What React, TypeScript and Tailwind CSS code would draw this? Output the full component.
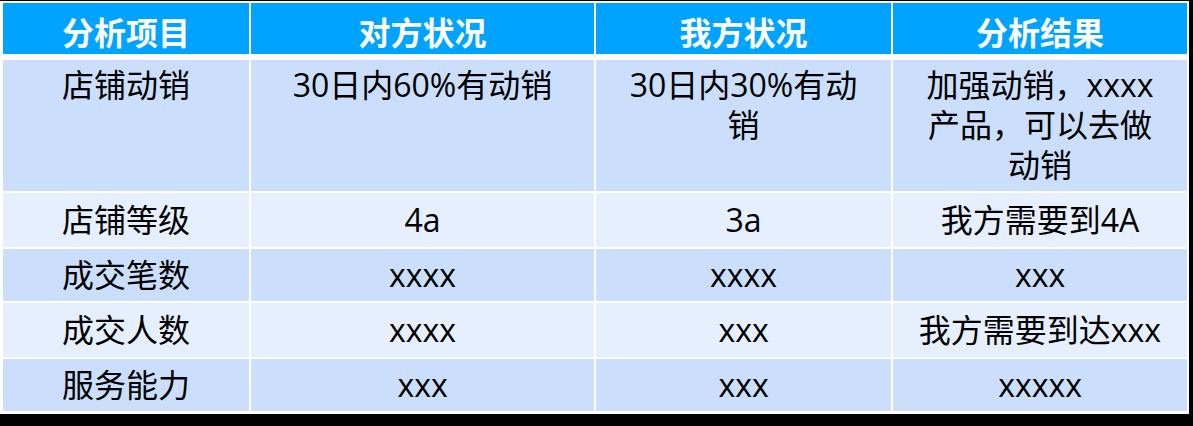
const headers = ["分析项目", "对方状况", "我方状况", "分析结果"];

const rows: { cells: string[][]; tone: "dark" | "light"; height: string; top?: boolean }[] = [
  {
    cells: [["店铺动销"], ["30日内60%有动销"], ["30日内30%有动", "销"], ["加强动销，xxxx", "产品，可以去做", "动销"]],
    tone: "dark",
    height: "h-[131px]",
    top: true
  },
  { cells: [["店铺等级"], ["4a"], ["3a"], ["我方需要到4A"]], tone: "light", height: "h-[54px]" },
  { cells: [["成交笔数"], ["xxxx"], ["xxxx"], ["xxx"]], tone: "dark", height: "h-[52px]" },
  { cells: [["成交人数"], ["xxxx"], ["xxx"], ["我方需要到达xxx"]], tone: "light", height: "h-[54px]" },
  { cells: [["服务能力"], ["xxx"], ["xxx"], ["xxxxx"]], tone: "dark", height: "h-[52px]" }
];

const gridCols = "grid grid-cols-[246px_343px_295px_294px] gap-x-[2px]";

export default function App() {
  return (
    <div className="h-[426px] w-[1193px] overflow-hidden bg-black pt-px">
      <div
        className="h-[413px] w-[1189px] bg-white pl-[3px] pr-[2px] pt-[2px]"
        style={{ fontFamily: '"Open Sans", "Noto Sans CJK SC", sans-serif' }}
      >
        <div className={`${gridCols} mb-[6px] h-[51px]`}>
          {headers.map((h) => (
            <div
              key={h}
              className="flex items-center justify-center bg-[#00a3ff] pt-[5px] text-[32px] font-bold leading-[40px] text-white"
              style={{ fontFamily: '"Noto Sans CJK SC", sans-serif' }}
            >
              {h}
            </div>
          ))}
        </div>
        <div className="flex flex-col gap-y-[2px]">
          {rows.map((row, i) => (
            <div key={i} className={`${gridCols} ${row.height}`}>
              {row.cells.map((lines, j) => (
                <div
                  key={j}
                  className={`flex flex-col text-center text-[32px] leading-[40px] text-black ${
                    row.top ? "justify-start pt-[5px]" : "justify-center"
                  } ${row.tone === "dark" ? "bg-[#cbdffc]" : "bg-[#e6effd]"}`}
                >
                  {lines.map((line, k) => (
                    <span key={k} className="whitespace-nowrap">
                      {line}
                    </span>
                  ))}
                </div>
              ))}
            </div>
          ))}
        </div>
      </div>
    </div>
  );
}
